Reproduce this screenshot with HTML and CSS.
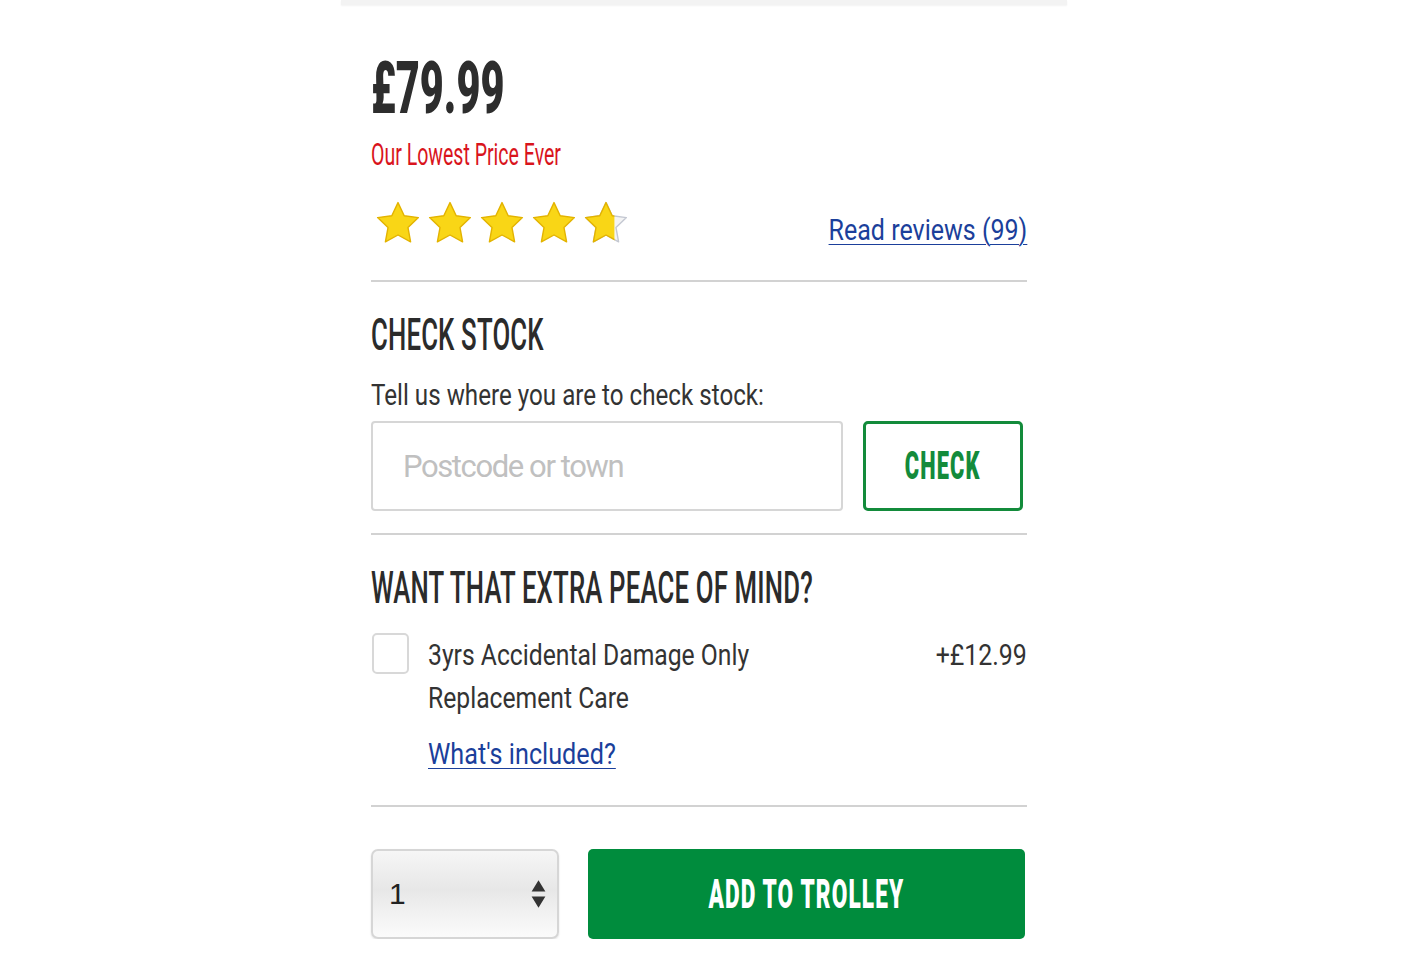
FILE: index.html
```html
<!DOCTYPE html>
<html lang="en">
<head>
  <meta charset="UTF-8">
  <title>Product - Add to trolley</title>
  <meta name="viewport" content="width=device-width, initial-scale=1.0">
  <link rel="stylesheet" href="styles.css">
</head>
<body>

  <div class="pagina">
    <div class="barra-superior"></div>

    <div class="contenido">
      <div class="precio">£79.99</div>
      <div class="oferta">Our Lowest Price Ever</div>

      <div class="valoracion">
        <div class="estrellas">
          <svg class="estrella" viewBox="0 0 24 24"><path d="M12 1.8l3.1 6.6 7.1.9-5.2 5 1.3 7.1L12 18l-6.3 3.4 1.3-7.1-5.2-5 7.1-.9z"/></svg>
          <svg class="estrella" viewBox="0 0 24 24"><path d="M12 1.8l3.1 6.6 7.1.9-5.2 5 1.3 7.1L12 18l-6.3 3.4 1.3-7.1-5.2-5 7.1-.9z"/></svg>
          <svg class="estrella" viewBox="0 0 24 24"><path d="M12 1.8l3.1 6.6 7.1.9-5.2 5 1.3 7.1L12 18l-6.3 3.4 1.3-7.1-5.2-5 7.1-.9z"/></svg>
          <svg class="estrella" viewBox="0 0 24 24"><path d="M12 1.8l3.1 6.6 7.1.9-5.2 5 1.3 7.1L12 18l-6.3 3.4 1.3-7.1-5.2-5 7.1-.9z"/></svg>
          <svg class="estrella" viewBox="0 0 24 24">
            <defs><clipPath id="media"><rect x="0" y="0" width="16.2" height="24"/></clipPath></defs>
            <path class="vacia" d="M12 1.8l3.1 6.6 7.1.9-5.2 5 1.3 7.1L12 18l-6.3 3.4 1.3-7.1-5.2-5 7.1-.9z"/>
            <path clip-path="url(#media)" d="M12 1.8l3.1 6.6 7.1.9-5.2 5 1.3 7.1L12 18l-6.3 3.4 1.3-7.1-5.2-5 7.1-.9z"/>
          </svg>
        </div>
        <a href="#" class="enlace reviews">Read reviews (99)</a>
      </div>

      <div class="seccion">
        <h2>CHECK STOCK</h2>
        <p class="texto">Tell us where you are to check stock:</p>
        <div class="fila-stock">
          <input type="text" class="campo" placeholder="Postcode or town">
          <button class="boton-check"><span>CHECK</span></button>
        </div>
      </div>

      <div class="seccion seccion-extra">
        <h2>WANT THAT EXTRA PEACE OF MIND?</h2>
        <div class="opcion">
          <span class="casilla"></span>
          <div class="opcion-texto">
            <span class="opcion-nombre">3yrs Accidental Damage Only</span>
            <span class="opcion-nombre">Replacement Care</span>
            <a href="#" class="enlace incluido">What's included?</a>
          </div>
          <span class="opcion-precio">+£12.99</span>
        </div>
      </div>

      <div class="compra">
        <div class="cantidad">
          <span>1</span>
          <svg class="flechas" viewBox="0 0 12 26"><path d="M6 2l5.5 9H.5z M6 24l5.5-9H.5z"/></svg>
        </div>
        <button class="boton-trolley"><span>ADD TO TROLLEY</span></button>
      </div>
    </div>
  </div>

</body>
</html>
```

FILE: styles.css
```css
:root {
  --verde: #008c3d;
  --rojo: #d9141c;
  --azul: #1b3f9b;
  --texto: #333;
  --linea: #d2d2d2;
}

body {
  margin: 0;
  background: white;
  color: var(--texto);
  font-family: Roboto, "Liberation Sans", sans-serif;
}

.pagina {
  width: 726px;
  margin: 0 auto;
}

.barra-superior {
  height: 5px;
  background: #f3f3f3;
  box-shadow: 0 1px 2px rgba(0,0,0,0.05);
}

.contenido {
  padding: 0 40px 0 30px;
}

/* el texto de la tienda es una DIN condensada: se estrecha Roboto */
.precio {
  margin-top: 48px;
  font-size: 72px;
  font-weight: 900;
  line-height: 72px;
  color: #2d2d2d;
  white-space: nowrap;
  transform: scaleX(0.575);
  transform-origin: left;
}

.oferta {
  margin-top: 12px;
  color: var(--rojo);
  font-size: 31px;
  line-height: 36px;
  white-space: nowrap;
  transform: scaleX(0.63);
  transform-origin: left;
}

.valoracion {
  display: flex;
  justify-content: space-between;
  align-items: flex-start;
  margin-top: 26px;
  padding-bottom: 28px;
  border-bottom: 2px solid var(--linea);
}

.estrellas {
  display: flex;
  gap: 4px;
  margin-left: 3px;
}

.estrella {
  width: 48px;
  height: 48px;
  fill: #f9d616;
  stroke: #e3b300;
  stroke-width: 0.7;
  stroke-linejoin: round;
}

.estrella .vacia {
  fill: #f4f4f4;
  stroke: #c4c8d2;
}

.enlace {
  color: var(--azul);
  font-size: 30px;
  line-height: 44px;
  white-space: nowrap;
  text-decoration: underline;
  text-decoration-thickness: 1px;
  text-underline-offset: 4px;
}

.reviews {
  display: inline-block;
  margin-top: 9px;
  transform: scaleX(0.834);
  transform-origin: right;
}

.seccion {
  padding: 29px 0 22px;
  border-bottom: 2px solid var(--linea);
}

.seccion-extra {
  padding-bottom: 29px;
}

h2 {
  margin: 0;
  font-size: 44px;
  font-weight: 500;
  line-height: 48px;
  letter-spacing: 0.3px;
  color: #2b2b2b;
  white-space: nowrap;
  transform: scaleX(0.585);
  transform-origin: left;
}

.texto {
  margin: 18px 0 8px;
  font-size: 30px;
  line-height: 36px;
  white-space: nowrap;
  transform: scaleX(0.806);
  transform-origin: left;
}

.fila-stock {
  display: flex;
  gap: 20px;
}

.campo {
  flex: 1;
  height: 90px;
  padding: 0 30px;
  border: 2px solid #d6d6d6;
  border-radius: 4px;
  box-sizing: border-box;
  font-family: Roboto, sans-serif;
  font-size: 31px;
  letter-spacing: -1.4px;
  color: var(--texto);
}

.campo::placeholder {
  color: #c0c0c0;
}

.boton-check {
  width: 160px;
  height: 90px;
  margin-right: 4px;
  padding: 0;
  background: white;
  border: 3px solid #138b3b;
  border-radius: 5px;
  color: #138b3b;
  font-family: Roboto, sans-serif;
  font-size: 39px;
  font-weight: 900;
}

.boton-check span {
  display: inline-block;
  letter-spacing: 2px;
  white-space: nowrap;
  transform: scaleX(0.56);
}

.opcion {
  display: flex;
  align-items: flex-start;
  margin-top: 21px;
}

.casilla {
  width: 37px;
  height: 41px;
  flex-shrink: 0;
  margin: 0 19px 0 1px;
  border: 2px solid #d8d8d8;
  border-radius: 5px;
  box-sizing: border-box;
}

.opcion-texto {
  flex: 1;
}

.opcion-nombre {
  display: block;
  font-size: 30px;
  line-height: 43px;
  white-space: nowrap;
  transform: scaleX(0.823);
  transform-origin: left;
}

.incluido {
  display: block;
  margin-top: 13px;
  transform: scaleX(0.84);
  transform-origin: left;
}

.opcion-precio {
  display: inline-block;
  font-size: 30px;
  line-height: 43px;
  white-space: nowrap;
  transform: scaleX(0.83);
  transform-origin: right;
}

.compra {
  display: flex;
  gap: 29px;
  padding: 42px 2px 0 0;
}

.cantidad {
  display: flex;
  align-items: center;
  justify-content: space-between;
  width: 188px;
  height: 90px;
  padding: 0 11px 0 16px;
  box-sizing: border-box;
  border: 2px solid #d6d6d6;
  border-radius: 7px;
  background: linear-gradient(#f6f6f6, #e7e7e7 45%, #ededed 60%, #fbfbfb);
  box-shadow: 0 1px 2px rgba(0,0,0,0.12);
  font-family: "Liberation Sans", sans-serif;
  font-size: 30px;
  color: #222;
}

.flechas {
  width: 15px;
  height: 34px;
  fill: #333;
}

.boton-trolley {
  flex: 1;
  height: 90px;
  padding: 0;
  background: var(--verde);
  border: none;
  border-radius: 5px;
  color: white;
  font-family: Roboto, sans-serif;
  font-size: 40px;
  font-weight: 900;
}

.boton-trolley span {
  display: inline-block;
  letter-spacing: 2px;
  white-space: nowrap;
  transform: scaleX(0.565);
}
```
